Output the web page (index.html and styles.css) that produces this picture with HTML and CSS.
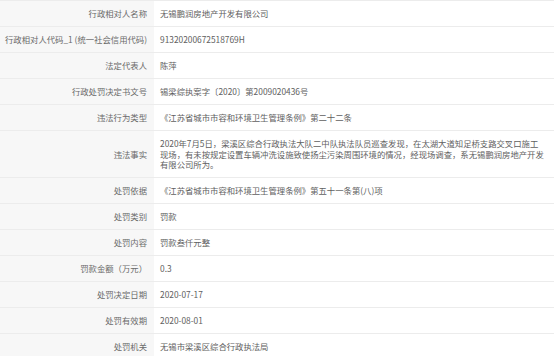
FILE: index.html
```html
<!DOCTYPE html>
<html lang="zh-CN">
<head>
<meta charset="utf-8">
<title>行政处罚信息</title>
<link rel="stylesheet" href="styles.css">
</head>
<body>
<div class="detail">
  <div class="row"><div class="label">行政相对人名称</div><div class="value">无锡鹏润房地产开发有限公司</div></div>
  <div class="row"><div class="label">行政相对人代码_1 (统一社会信用代码)</div><div class="value">91320200672518769H</div></div>
  <div class="row"><div class="label">法定代表人</div><div class="value">陈萍</div></div>
  <div class="row"><div class="label">行政处罚决定书文号</div><div class="value">锡梁综执案字〔2020〕第2009020436号</div></div>
  <div class="row"><div class="label">违法行为类型</div><div class="value">《江苏省城市市容和环境卫生管理条例》第二十二条</div></div>
  <div class="row"><div class="label">违法事实</div><div class="value">2020年7月5日，梁溪区综合行政执法大队二中队执法队员巡查发现，在太湖大道知足桥支路交叉口施工现场，有未按规定设置车辆冲洗设施致使扬尘污染周围环境的情况，经现场调查，系无锡鹏润房地产开发有限公司所为。</div></div>
  <div class="row"><div class="label">处罚依据</div><div class="value">《江苏省城市市容和环境卫生管理条例》第五十一条第(八)项</div></div>
  <div class="row"><div class="label">处罚类别</div><div class="value">罚款</div></div>
  <div class="row"><div class="label">处罚内容</div><div class="value">罚款叁仟元整</div></div>
  <div class="row"><div class="label">罚款金额（万元）</div><div class="value">0.3</div></div>
  <div class="row"><div class="label">处罚决定日期</div><div class="value">2020-07-17</div></div>
  <div class="row"><div class="label">处罚有效期</div><div class="value">2020-08-01</div></div>
  <div class="row"><div class="label">处罚机关</div><div class="value">无锡市梁溪区综合行政执法局</div></div>
</div>
</body>
</html>
```
FILE: styles.css
```css
html, body {
  margin: 0;
  padding: 0;
  background: #ffffff;
}
body {
  font-family: "Noto Sans CJK SC", sans-serif;
  font-size: 8.35px;
  line-height: 10.5px;
  color: #666666;
  text-spacing-trim: space-all;
  font-kerning: none;
}
.detail {
  border-top: 1px solid #ececec;
}
.row {
  display: grid;
  grid-template-columns: 154px 1fr;
  border-bottom: 1px solid #ececec;
}
.label {
  background: #f7f7f7;
  color: #6a6a6a;
  padding: 0 7px 0 2px;
  display: flex;
  align-items: center;
  justify-content: flex-end;
  white-space: nowrap;
  overflow: hidden;
}
.value {
  padding: 7.25px 8.7px 7.25px 6px;
  color: #606060;
  overflow: hidden;
}
```
